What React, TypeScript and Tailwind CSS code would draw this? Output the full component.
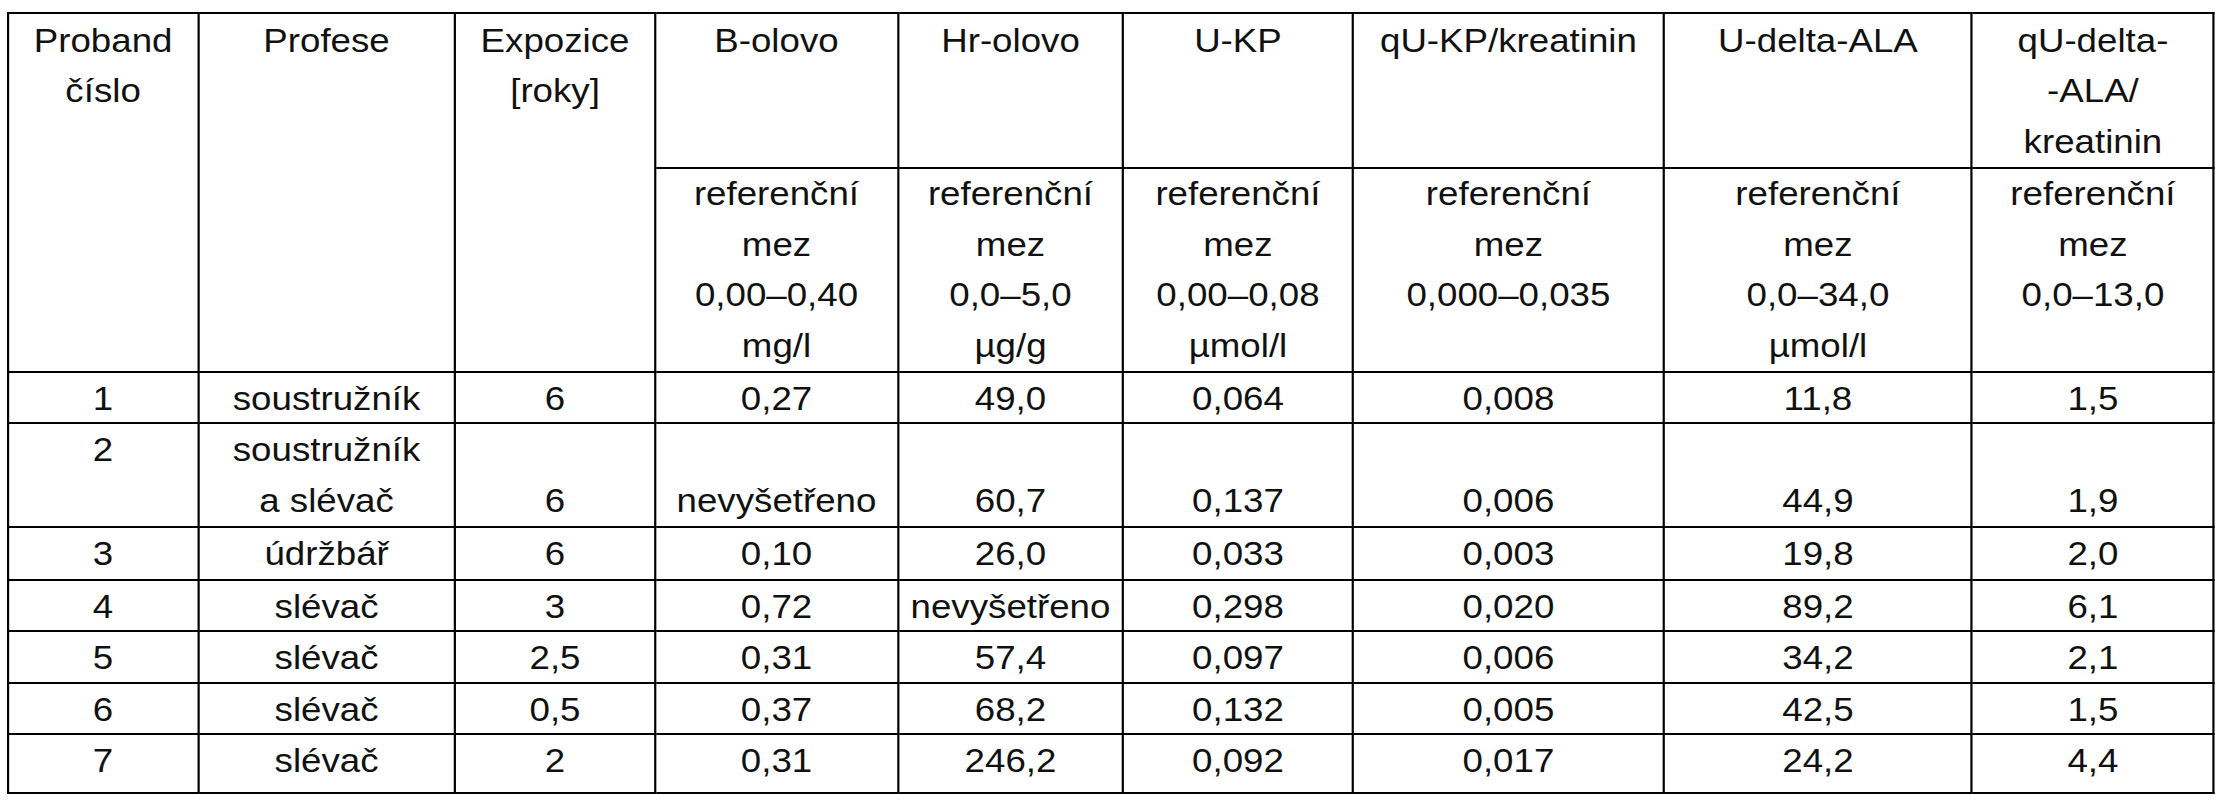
import React from 'react';

type Row = {
  cells: React.ReactNode[];
  h: string;
  tall?: boolean;
};

const rows: Row[] = [
  { cells: ['1', 'soustružník', '6', '0,27', '49,0', '0,064', '0,008', '11,8', '1,5'], h: 'h-[51px]' },
  {
    cells: [
      '2',
      <>
        soustružník
        <br />a slévač
      </>,
      '6',
      'nevyšetřeno',
      '60,7',
      '0,137',
      '0,006',
      '44,9',
      '1,9',
    ],
    h: 'h-[103px]',
    tall: true,
  },
  { cells: ['3', 'údržbář', '6', '0,10', '26,0', '0,033', '0,003', '19,8', '2,0'], h: 'h-[53px]' },
  { cells: ['4', 'slévač', '3', '0,72', 'nevyšetřeno', '0,298', '0,020', '89,2', '6,1'], h: 'h-[51px]' },
  { cells: ['5', 'slévač', '2,5', '0,31', '57,4', '0,097', '0,006', '34,2', '2,1'], h: 'h-[52px]' },
  { cells: ['6', 'slévač', '0,5', '0,37', '68,2', '0,132', '0,005', '42,5', '1,5'], h: 'h-[51px]' },
  { cells: ['7', 'slévač', '2', '0,31', '246,2', '0,092', '0,017', '24,2', '4,4'], h: 'h-[59px]' },
];

// header cells
const th = 'border-2 border-black p-0 pt-[1.5px] text-center align-top leading-[50.5px]';
const sub = 'border-2 border-black p-0 text-center align-top leading-[50.5px]';
// body cells
const td = 'border-2 border-black p-0 pt-[3px] text-center align-top leading-[46px]';
const tdTall = 'border-2 border-black p-0 pt-[1px] text-center align-top leading-[50.5px]';
const tdTallBottom = 'border-2 border-black p-0 text-center align-bottom leading-[50.5px]';

export default function App() {
  return (
    <div className="min-h-[800px] overflow-hidden bg-white pl-[7px] pt-[12px] font-['Liberation_Sans',Arial,sans-serif] text-[33.5px] text-[#111]">
      <table className="w-[2016px] origin-left scale-x-[1.095] table-fixed border-collapse">
        <colgroup>
          <col className="w-[173.5px]" />
          <col className="w-[234.7px]" />
          <col className="w-[182.6px]" />
          <col className="w-[221.9px]" />
          <col className="w-[205.5px]" />
          <col className="w-[210px]" />
          <col className="w-[284px]" />
          <col className="w-[281.3px]" />
          <col className="w-[221px]" />
        </colgroup>
        <thead>
          <tr className="h-[155px]">
            <td rowSpan={2} className={th}>
              Proband
              <br />
              číslo
            </td>
            <td rowSpan={2} className={th}>
              Profese
            </td>
            <td rowSpan={2} className={th}>
              Expozice
              <br />
              [roky]
            </td>
            <td className={th}>B-olovo</td>
            <td className={th}>Hr-olovo</td>
            <td className={th}>U-KP</td>
            <td className={th}>qU-KP/kreatinin</td>
            <td className={th}>U-delta-ALA</td>
            <td className={th}>
              qU-delta-
              <br />
              -ALA/
              <br />
              kreatinin
            </td>
          </tr>
          <tr className="h-[204px]">
            <td className={sub}>
              referenční
              <br />
              mez
              <br />
              0,00–0,40
              <br />
              mg/l
            </td>
            <td className={sub}>
              referenční
              <br />
              mez
              <br />
              0,0–5,0
              <br />
              µg/g
            </td>
            <td className={sub}>
              referenční
              <br />
              mez
              <br />
              0,00–0,08
              <br />
              µmol/l
            </td>
            <td className={sub}>
              referenční
              <br />
              mez
              <br />
              0,000–0,035
            </td>
            <td className={sub}>
              referenční
              <br />
              mez
              <br />
              0,0–34,0
              <br />
              µmol/l
            </td>
            <td className={sub}>
              referenční
              <br />
              mez
              <br />
              0,0–13,0
            </td>
          </tr>
        </thead>
        <tbody>
          {rows.map((row, i) => (
            <tr key={i} className={row.h}>
              {row.cells.map((c, j) => (
                <td key={j} className={row.tall ? (j > 1 ? tdTallBottom : tdTall) : td}>
                  {c}
                </td>
              ))}
            </tr>
          ))}
        </tbody>
      </table>
    </div>
  );
}
